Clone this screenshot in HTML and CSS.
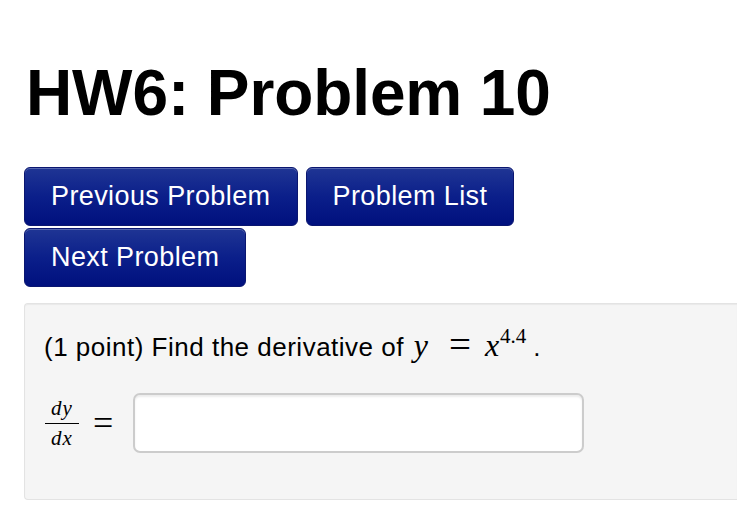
FILE: index.html
```html
<!DOCTYPE html>
<html>
<head>
<meta charset="utf-8">
<link rel="stylesheet" href="styles.css">
</head>
<body>
<div class="page">
  <h1 class="title">HW6: Problem 10</h1>
  <div class="nav">
    <a class="btn">Previous Problem</a><a class="btn">Problem List</a><a class="btn">Next Problem</a>
  </div>
  <div class="problem">
    <p class="statement">(1 point) Find the derivative of <span class="math"><i>y</i><span class="eq">=</span><i>x</i><sup>4.4</sup></span>.</p>
    <div class="answer">
      <span class="frac"><span class="num"><i>dy</i></span><span class="den"><i>dx</i></span></span>
      <span class="eq2">=</span>
      <span class="input"></span>
    </div>
  </div>
</div>
</body>
</html>
```
FILE: styles.css
```css
html, body {
  margin: 0;
  padding: 0;
  background: #ffffff;
}
.page {
  padding: 0 0 0 24px;
  font-family: "Liberation Sans", Arial, sans-serif;
  color: #000;
}
.title {
  margin: 0;
  padding: 61px 0 0 2px;
  font-size: 64px;
  line-height: 64px;
  font-weight: bold;
  letter-spacing: -0.1px;
}
.nav {
  margin-top: 42px;
  display: flex;
  flex-wrap: wrap;
  width: 520px;
  column-gap: 8px;
  row-gap: 2px;
}
.btn {
  display: block;
  box-sizing: border-box;
  height: 59px;
  padding: 0 26px;
  line-height: 57px;
  font-size: 27px;
  letter-spacing: 0.4px;
  color: #fff;
  background: linear-gradient(to bottom, #1f3594 0%, #0b1f8a 50%, #00107e 100%);
  border: 1px solid #0a1670;
  border-radius: 6px;
  box-shadow: inset 0 1px 0 rgba(255,255,255,0.25);
}
.problem {
  margin-top: 16px;
  box-sizing: border-box;
  height: 197px;
  background: #f5f5f5;
  border: 1px solid #e3e3e3;
  border-right: none;
  border-radius: 4px 0 0 4px;
  box-shadow: inset 0 1px 1px rgba(0,0,0,0.05);
  padding: 0 0 0 19px;
}
.statement {
  margin: 0;
  padding-top: 23px;
  font-size: 26px;
  line-height: 36px;
  letter-spacing: 0.5px;
}
.math {
  font-family: "Liberation Serif", "Times New Roman", serif;
  font-size: 32px;
  letter-spacing: 0;
}
.math i {
  font-style: italic;
  margin-left: 2px;
}
.eq {
  display: inline-block;
  font-size: 39px;
  line-height: 30px;
  margin: 0 12px 0 21px;
  vertical-align: -2px;
}
.math sup {
  font-size: 21px;
  vertical-align: 13px;
  line-height: 0;
  margin-left: 1px;
  margin-right: 7px;
}
.answer {
  display: flex;
  align-items: center;
  margin-top: 28px;
}
.frac {
  display: inline-flex;
  flex-direction: column;
  align-items: center;
  font-family: "Liberation Serif", "Times New Roman", serif;
  font-size: 21px;
  line-height: 24px;
  width: 34px;
  margin-left: 1px;
}
.num {
  border-bottom: 1.5px solid #000;
  width: 100%;
  text-align: center;
  padding-bottom: 3px;
  letter-spacing: 1px;
}
.den {
  padding-top: 2px;
  letter-spacing: 1px;
}
.eq2 {
  font-family: "Liberation Serif", "Times New Roman", serif;
  font-size: 36px;
  margin: 0 20px 0 14px;
}
.input {
  display: block;
  box-sizing: border-box;
  width: 451px;
  height: 60px;
  background: #fff;
  border: 2px solid #cccccc;
  border-radius: 7px;
  box-shadow: inset 0 2px 2px rgba(0,0,0,0.08);
}
```
